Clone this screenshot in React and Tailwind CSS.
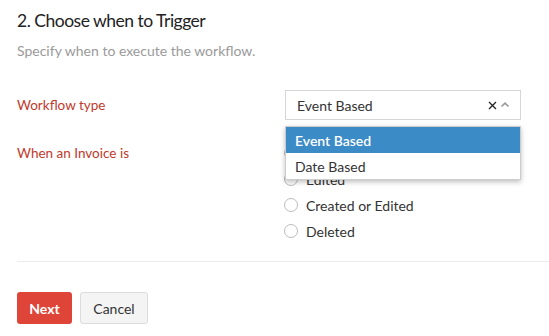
import { useState } from "react";

const radios = ["Created", "Edited", "Created or Edited", "Deleted"];

export default function App() {
  const [choice, setChoice] = useState(null);

  return (
    <div className="w-[549px] h-[336px] bg-white overflow-hidden font-['Lato',_'Liberation_Sans',_sans-serif] text-[#333]">
      <div className="pl-[17px]">
        <h2 className="pt-[9px] text-[17.5px] leading-[24px] tracking-[-0.5px] text-[#222]">2. Choose when to Trigger</h2>
        <p className="mt-[9px] text-[14px] leading-[18px] text-[#9a9a9a]">Specify when to execute the workflow.</p>

        <div className="mt-[30px] flex flex-col">
          {/* workflow type */}
          <div className="flex items-center">
            <label className="w-[268px] text-[13.5px] text-[#c0392b]">Workflow type</label>
            <div className="relative w-[236px]">
              <div className="h-[30px] flex items-center border border-[#d6d6d6] bg-white pl-[11px] pr-[10px] text-[14px]">
                <span className="flex-1">Event Based</span>
                <svg width="9" height="9" viewBox="0 0 9 9">
                  <path d="M1 1 L8 8 M8 1 L1 8" fill="none" stroke="#222" strokeWidth="1.3" />
                </svg>
                <svg width="10" height="10" viewBox="0 0 10 10" className="ml-[3px]">
                  <path d="M1.5 6.5 L5 3.2 L8.5 6.5" fill="none" stroke="#999" strokeWidth="1.6" />
                </svg>
              </div>
              <div className="absolute left-0 right-0 top-full mt-[6px] z-10 bg-white border border-[#ccc] shadow-[0_2px_5px_rgba(0,0,0,0.25)] text-[14px]">
                <div className="h-[26px] flex items-center pl-[9px] bg-[#3b8bc6] text-white font-semibold">Event Based</div>
                <div className="h-[26px] flex items-center pl-[9px]">Date Based</div>
              </div>
            </div>
          </div>

          {/* trigger event */}
          <div className="mt-[20px] flex items-start">
            <label className="w-[267px] h-[26px] flex items-center text-[13.5px] text-[#c0392b]">When an Invoice is</label>
            <div className="flex flex-col">
              {radios.map((r) => (
                <label key={r} className="h-[26px] flex items-center gap-[8px] text-[14px] cursor-pointer" onClick={() => setChoice(r)}>
                  <span className="w-[14px] h-[14px] rounded-full border border-[#bbb] bg-white flex items-center justify-center">
                    {choice === r && <span className="w-[6px] h-[6px] rounded-full bg-[#3b8bc6]" />}
                  </span>
                  {r}
                </label>
              ))}
            </div>
          </div>
        </div>

        <div className="mt-[17px] border-t border-[#ebebeb]" />

        <div className="mt-[30px] flex gap-[8px]">
          <button className="w-[55px] h-[32px] rounded-[3px] bg-[#de4437] text-white text-[14px] font-bold">Next</button>
          <button className="w-[68px] h-[32px] rounded-[3px] bg-[#f4f4f4] border border-[#dcdcdc] text-[14px] text-[#333]">Cancel</button>
        </div>
      </div>
    </div>
  );
}
